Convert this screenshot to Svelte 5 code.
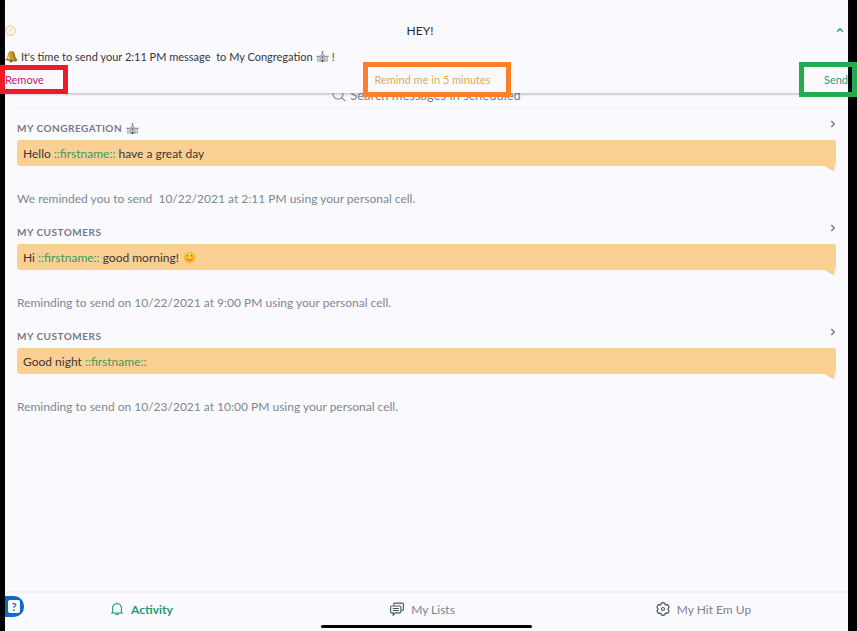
<script lang="ts">
let query = "";

const tag = "::firstname::";

const messages = [
  {
    list: "My Congregation",
    church: true,
    before: "Hello ",
    after: " have a great day",
    smile: false,
    note: "We reminded you to send \u00a010/22/2021 at 2:11 PM using your personal cell."
  },
  {
    list: "My Customers",
    church: false,
    before: "Hi ",
    after: " good morning! ",
    smile: true,
    note: "Reminding to send on 10/22/2021 at 9:00 PM using your personal cell."
  },
  {
    list: "My Customers",
    church: false,
    before: "Good night ",
    after: "",
    smile: false,
    note: "Reminding to send on 10/23/2021 at 10:00 PM using your personal cell."
  }
];
</script>

{#snippet church()}
  <svg class="emoji" viewBox="0 0 13 13" aria-hidden="true">
    <path d="M6.5 1v3M5.3 2.2h2.4" stroke="#85868f" stroke-width=".8" />
    <path d="M4 7 6.500 4 9 7v5H4z" fill="#cfd0d7" />
    <path d="M3.600 7 6.500 3.900 9.400 7M.4 6.300h3.400M9.200 6.300h3.400" fill="none" stroke="#74757f" stroke-width="1" />
    <path d="M1 7h3v5H1zM9 7h3v5H9z" fill="#e2e3ea" />
    <path d="M1.800 7.500v4M11.200 7.500v4M4 7.500V12M9 7.500V12" stroke="#8d8e98" stroke-width=".8" />
    <path d="M5.600 12V9.600h1.800V12z" fill="#44454e" />
    <circle cx="6.500" cy="7.200" r="1" fill="#55565f" />
  </svg>
{/snippet}

<div class="device">
  <div class="screen">
    <section class="banner">
      <div class="banner-head">
        <svg class="clock" viewBox="0 0 12 12" aria-hidden="true">
          <circle cx="6" cy="6" r="5" fill="none" stroke="#f3cd94" stroke-width="1.3" />
          <path d="M7.6 3.8 6 6.4 4.6 7.2" fill="none" stroke="#f3cd94" stroke-width="1.2" />
        </svg>
        <h1>HEY!</h1>
        <button class="collapse" aria-label="Collapse">
          <svg viewBox="0 0 8 6" aria-hidden="true">
            <path d="M1.2 4.6 4 1.8l2.8 2.8" fill="none" stroke="#2a9d80" stroke-width="1.5" />
          </svg>
        </button>
      </div>
      <p class="reminder">
        <svg class="emoji" viewBox="0 0 13 13" aria-hidden="true">
          <path d="M5.3 1.2c2.8-.8 4.3 1 4.7 3.4.4 2.6 1 3.7 2.4 4.8L10.8 11 .8 9.6c1.3-1.2 1.6-2.4 1.9-4.4.2-2 .9-3.4 2.6-4z" fill="#c8962a" />
          <path d="M4.900 2.200c-1.500 1-1.100 4.400-2.600 6.800l3 .4C4.300 6.500 4.200 4 4.900 2.200z" fill="#f2d25c" />
          <path d="M8 2c1.400 2.200 1 5 2.500 8" fill="none" stroke="#82601a" stroke-width="1" />
          <path d="M.6 9.700 11 11.100l1.500-1.500" fill="none" stroke="#6c511c" stroke-width=".9" />
          <circle cx="6" cy="11.200" r="1.200" fill="#76581b" />
        </svg>
        <span>It's time to send your 2:11 PM message &nbsp;to My Congregation</span>
        {@render church()}
        <span>!</span>
      </p>
      <div class="actions">
        <button class="remove">Remove</button>
        <button class="remind">Remind me in 5 minutes</button>
        <button class="send">Send</button>
      </div>
    </section>

    <main>
      <label class="search">
        <svg viewBox="0 0 14 14" aria-hidden="true">
          <circle cx="6" cy="6" r="5" fill="none" stroke="#7d848c" stroke-width="1.1" />
          <path d="m9.600 9.600 3.800 3.600" stroke="#7d848c" stroke-width="1.1" />
        </svg>
        <input type="text" aria-label="Search messages" placeholder="Search messages in scheduled" bind:value={query}>
      </label>

      {#each messages as message}
        <article>
          <div class="list-head">
            <h2>{message.list}</h2>
            {#if message.church}{@render church()}{/if}
            <button class="open" aria-label="Open message">
              <svg viewBox="0 0 6 8" aria-hidden="true">
                <path d="m1.300 1 3 3-3 3" fill="none" stroke="#73777e" stroke-width="1.3" />
              </svg>
            </button>
          </div>
          <p class="bubble">
            <span>{message.before}<span class="tag">{tag}</span>{message.after}</span>
            {#if message.smile}
              <svg class="emoji" viewBox="0 0 13 13" aria-hidden="true">
                <circle cx="6.500" cy="6.500" r="5.800" fill="#fbb52c" />
                <circle cx="6" cy="5" r="3.600" fill="#fdc842" />
                <path d="M4.400 4v1.400M8.400 4v1.400" stroke="#a55f16" stroke-width="1.1" />
                <path d="M3.500 7.400c1.300 2.300 4.700 2.300 6 0" fill="none" stroke="#b9691b" stroke-width="1" />
              </svg>
            {/if}
          </p>
          <p class="note">{message.note}</p>
        </article>
      {/each}
    </main>

    <nav>
      <a class="active" href="#activity">
        <svg viewBox="0 0 14 14" aria-hidden="true">
          <path d="M1 11h12M2.600 11V6.200c0-2.700 1.800-4.500 4.400-4.500s4.400 1.800 4.400 4.500V11M7 .4v1.300M5.400 11.200c.2 2.100 3 2.100 3.200 0" fill="none" stroke="currentColor" stroke-width="1.1" />
        </svg>
        Activity
      </a>
      <a href="#lists">
        <svg viewBox="0 0 14 14" aria-hidden="true">
          <path d="M3.800 3.500V2.200c0-.7.4-1.100 1.100-1.100h7.300c.7 0 1.200.4 1.200 1.100v5c0 .7-.5 1.200-1.200 1.200h-.8" fill="none" stroke="#46595f" stroke-width="1.1" />
          <path d="M1.800 4h7.900c.8 0 1.200.5 1.200 1.200v4.500c0 .8-.4 1.200-1.200 1.200H5.400L3.200 13.200v-2.300H1.800c-.8 0-1.200-.4-1.200-1.200V5.200C.6 4.500 1 4 1.800 4z" fill="#fafafe" stroke="#46595f" stroke-width="1.1" />
          <path d="M2.800 6.500h6M2.800 8.500h6" stroke="#46595f" stroke-width="1" />
        </svg>
        My Lists
      </a>
      <a href="#hit-em-up">
        <svg viewBox="0 0 14 14" aria-hidden="true">
          <path d="M5.300 1.200Q7 0 8.700 1.200L9.300 2.800 11.200 2.600Q13 3.400 12.900 5.400L11.800 7 12.900 8.600Q13 10.600 11.200 11.400L9.300 11.200 8.700 12.800Q7 14 5.300 12.800L4.700 11.200 2.800 11.400Q1 10.600 1.100 8.600L2.200 7 1.100 5.400Q1 3.400 2.800 2.600L4.700 2.800z" fill="none" stroke="#46595f" stroke-width="1.2" stroke-linejoin="round" />
          <circle cx="7" cy="7" r="1.500" fill="none" stroke="#46595f" stroke-width="1.1" />
        </svg>
        My Hit Em Up
      </a>
    </nav>
    <div class="home-bar"></div>

    <button class="help" aria-label="Help">
      <span>?</span>
    </button>
  </div>
</div>

<style>
:global(body) {
  margin: 0;
  background: #000;
}

.device {
  min-height: 100vh;
  box-sizing: border-box;
  padding: 0 9px 0 5px;
  display: flex;
  background: #000;
  font-family: Lato, "Open Sans", sans-serif;
  font-size: 12px;
  color: #35373d;
}
.screen {
  position: relative;
  flex: 1;
  display: flex;
  flex-direction: column;
  background: #fafafe;
}
h1, h2, p {
  margin: 0;
  font-size: inherit;
  font-weight: 400;
}
button {
  padding: 0;
  border: none;
  background: none;
  font: inherit;
  color: inherit;
  cursor: pointer;
}
svg {
  display: block;
  flex: none;
}
.emoji {
  width: 13px;
  height: 13px;
}

/* reminder banner */
.banner {
  position: absolute;
  top: 0;
  left: 0;
  right: 0;
  z-index: 2;
  padding-top: 19px;
  background: #fafafe;
  box-shadow: 0 1px 3px rgba(60, 60, 70, 0.4);
}
.banner-head {
  height: 22px;
  display: flex;
  align-items: center;
  justify-content: space-between;
}
.clock {
  width: 11px;
  height: 11px;
}
.banner-head h1 {
  font-size: 12px;
  color: #26282e;
}
.collapse {
  padding: 4px 4px 4px 12px;
}
.collapse svg {
  width: 8px;
  height: 6px;
}
.reminder {
  height: 20px;
  margin-top: 5px;
  display: flex;
  align-items: center;
  gap: 3px;
  font-size: 11px;
}
.actions {
  position: relative;
  margin: -4px -9px -4px -5px;
  height: 35px;
  display: flex;
  align-items: center;
  justify-content: space-between;
  font-size: 11px;
}
.actions button {
  box-sizing: border-box;
  height: 35px;
  border: 5px solid;
}
.actions .remove {
  width: 68px;
  height: 29px;
  border-color: #ed1c24;
  color: #b8206d;
  text-align: left;
}
.actions .remind {
  width: 148px;
  margin-left: 6px;
  padding-right: 8px;
  border-color: #fd7f27;
  color: #dfaa5c;
}
.actions .send {
  width: 58px;
  padding-right: 4px;
  border-color: #22ac4c;
  color: #2a9d80;
  text-align: right;
}

/* scheduled messages */
main {
  flex: 1;
  padding-top: 83px;
}
.search {
  height: 24px;
  margin: 0 12px;
  border-bottom: 1px solid #f0f0f5;
  display: flex;
  align-items: center;
  justify-content: center;
  gap: 4px;
}
.search svg {
  width: 14px;
  height: 14px;
}
.search input {
  field-sizing: content;
  padding: 0;
  border: none;
  outline: none;
  background: none;
  font: inherit;
  font-size: 13px;
  color: #35373d;
}
.search input::placeholder {
  color: #7d848c;
  opacity: 1;
}
article {
  margin: 0 12px;
  padding: 10px 0 2px;
  border-bottom: 1px solid #f3f3f8;
}
.list-head {
  height: 20px;
  display: flex;
  align-items: center;
  gap: 4px;
}
.list-head h2 {
  font-size: 10px;
  font-weight: 700;
  letter-spacing: 0.5px;
  text-transform: uppercase;
  color: #747a84;
}
.open {
  margin-left: auto;
}
.open svg {
  width: 6px;
  height: 8px;
  margin-bottom: 8px;
}
.bubble {
  position: relative;
  height: 26px;
  margin-top: 2px;
  padding: 0 6px;
  display: flex;
  align-items: center;
  gap: 4px;
  border-radius: 3px;
  background: #f9cf94;
  color: #40362f;
}
.bubble::after {
  content: "";
  position: absolute;
  right: 1px;
  top: 100%;
  width: 10px;
  height: 5px;
  background: #f9cf94;
  clip-path: polygon(0 0, 100% 0, 90% 100%, 60% 80%);
}
.bubble .tag {
  color: #419a5c;
}
.note {
  margin-top: 23px;
  line-height: 20px;
  color: #7f8790;
}

/* bottom navigation */
nav {
  height: 32px;
  padding-right: 8px;
  display: grid;
  grid-template-columns: repeat(3, 1fr);
  gap: 8px;
  border-top: 2px solid #f2f2f6;
}
nav a {
  display: flex;
  align-items: center;
  justify-content: center;
  gap: 7px;
  color: #7d838a;
  text-decoration: none;
}
nav svg {
  width: 14px;
  height: 14px;
}
nav .active {
  font-weight: 700;
  color: #1f9873;
}
.home-bar {
  width: 25%;
  height: 3px;
  margin: 0 auto 3px;
  border-radius: 2px;
  background: #000;
}
.help {
  position: absolute;
  left: 0;
  bottom: 14px;
  width: 19px;
  height: 21px;
  border-radius: 0 10px 10px 0;
  background: #1268c4;
}
.help span {
  display: block;
  width: 12px;
  margin-left: 3px;
  border-radius: 2px;
  background: #fff;
  font-size: 11px;
  line-height: 13px;
  font-weight: 700;
  color: #1268c4;
}
</style>
